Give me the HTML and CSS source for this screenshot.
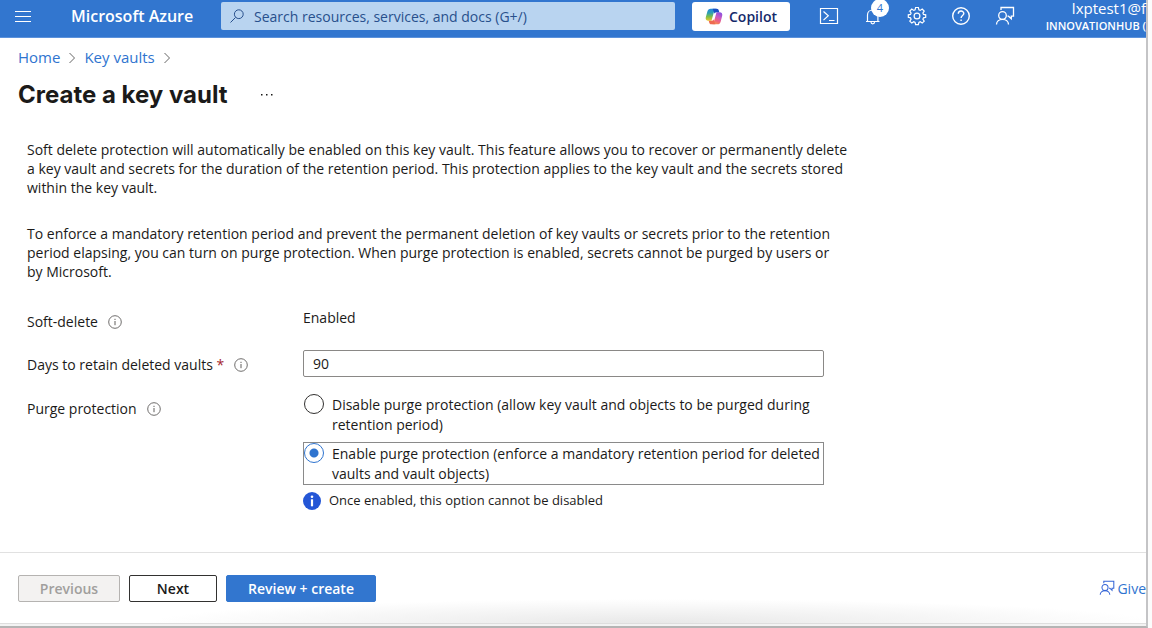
FILE: index.html
```html
<!DOCTYPE html>
<html lang="en">
<head>
<meta charset="utf-8">
<title>Create a key vault - Microsoft Azure</title>
<link rel="stylesheet" href="styles.css">
</head>
<body>
<svg class="defs" aria-hidden="true">
  <defs>
    <symbol id="i-info" viewBox="0 0 14 14"><circle cx="7" cy="7" r="6.300" fill="none" stroke="currentColor" stroke-width=".9"/><path d="M7 6v4.200M7 3.800v1.200" stroke="currentColor" fill="none"/></symbol>
    <symbol id="i-feedback" viewBox="0 0 20 20"><g fill="none" stroke="currentColor" stroke-width="1.300"><circle cx="7.500" cy="9.500" r="3.800"/><path d="M1.500 18.500c0-3 2.600-5.200 6-5.200s6 2.200 6 5.200M6 4V1.500h12.500v8.700h-2.200v2.600l-2.800-2.600h-1"/></g></symbol>
    <symbol id="i-chevron" viewBox="0 0 8 12"><path d="M1.500 1l5 5-5 5" fill="none" stroke="currentColor"/></symbol>
  </defs>
</svg>
<div class="window">
  <header class="topbar">
    <button class="icon-button menu" aria-label="Show portal menu"><svg viewBox="0 0 16 12"><path d="M0 1.500h16M0 6.500h16M0 11.500h16" stroke="currentColor"/></svg></button>
    <a class="brand" href="#">Microsoft Azure</a>
    <label class="search">
      <svg viewBox="0 0 14 14"><g fill="none" stroke="currentColor"><circle cx="8.800" cy="5.200" r="4.400"/><path d="M5.600 8.400L.5 13.500"/></g></svg>
      <input type="search" aria-label="Search" placeholder="Search resources, services, and docs (G+/)">
    </label>
    <button class="copilot">
      <svg viewBox="0 0 18 17" aria-hidden="true">
        <defs>
          <linearGradient id="cool" x1="0.300" y1="0" x2="0.300" y2="1"><stop offset="0" stop-color="#2488dc"/><stop offset=".35" stop-color="#2c9fb5"/><stop offset=".65" stop-color="#79bd4b"/><stop offset="1" stop-color="#e8c82d"/></linearGradient>
          <linearGradient id="warm" x1="0.700" y1="0" x2="0.300" y2="1"><stop offset="0" stop-color="#8c50e0"/><stop offset=".4" stop-color="#cc5abf"/><stop offset=".7" stop-color="#f0647a"/><stop offset="1" stop-color="#f59a4c"/></linearGradient>
        </defs>
        <path fill="url(#warm)" d="M11.500 4.200h3c2.300 0 3.200 1.700 2.700 3.600l-1.500 5.600c-.5 1.900-1.500 2.900-3.400 2.900H6.400c1.500 0 2-1 2.400-2.400z"/>
        <path fill="url(#cool)" d="M6.500 12.700h-3C1.200 12.700.3 11.200.8 9.200l1.500-5.500C2.800 1.700 4 .7 5.800.7h5.800c-1.500 0-2 1-2.400 2.400z"/>
        <path fill="#1b4fc4" d="M7.600.7h4.200c1.200 0 1.800.9 2.100 2.100l.4 1.400h-2.600c-1.200 0-1.800.5-2.100 1.500z"/>
        <path fill="#ee6a50" d="M10.400 16.300H6.200c-1.200 0-1.800-.9-2.100-2.100l-.4-1.500h2.600c1.200 0 1.800-.5 2.100-1.500z"/>
      </svg>
      Copilot
    </button>
    <nav class="tools" aria-label="Portal tools">
      <button class="icon-button" aria-label="Cloud Shell"><svg viewBox="0 0 20 20"><g fill="none" stroke="currentColor" stroke-width="1.200"><path d="M1.500 2.500h17v15h-17zM4.500 5.500l4.800 4.300-4.800 4.300M10 14.500h5.500"/></g></svg></button>
      <button class="icon-button" aria-label="Notifications"><svg viewBox="0 0 20 20"><g fill="none" stroke="currentColor" stroke-width="1.200"><path d="M3 15.500h13.500M4.500 15.500V9c0-3 2.200-5 5.200-5s5.200 2 5.200 5v6.500M8 16c0 2.400 3.500 2.400 3.500 0"/></g></svg><span class="badge">4</span></button>
      <button class="icon-button" aria-label="Settings"><svg viewBox="0 0 20 20"><g fill="none" stroke="currentColor" stroke-width="1.200"><circle cx="10" cy="10" r="2.900"/><path d="M8.600 1.500h2.800l.5 2.300 1.300.6 2-1.300 2 2-1.300 2 .6 1.300 2.200.4v2.500l-2.200.5-.6 1.400 1.300 1.900-2 2-2-1.300-1.300.6-.5 2.200H8.600l-.5-2.200-1.300-.6-2 1.300-2-2 1.300-1.900-.6-1.400-2.200-.5V8.800l2.200-.4.6-1.300-1.300-2 2-2 2 1.300 1.300-.6z"/></g></svg></button>
      <button class="icon-button" aria-label="Help"><svg viewBox="0 0 20 20"><g fill="none" stroke="currentColor" stroke-width="1.400"><circle cx="10" cy="10" r="8.300"/><path d="M7.300 7.800c0-3.700 5.500-3.500 5.500-.3 0 2-2.700 2.200-2.700 4.500M10.100 13.500v1.600"/></g></svg></button>
      <button class="icon-button" aria-label="Feedback"><svg viewBox="0 0 20 20"><use href="#i-feedback"/></svg></button>
    </nav>
    <div class="account"><span class="user">lxptest1@f</span><span class="tenant">INNOVATIONHUB (</span></div>
  </header>

  <nav class="breadcrumb" aria-label="Breadcrumb">
    <a href="#">Home</a><svg><use href="#i-chevron"/></svg><a href="#">Key vaults</a><svg><use href="#i-chevron"/></svg>
  </nav>
  <div class="title-row">
    <h1>Create a key vault</h1>
    <button class="more" aria-label="More"><svg viewBox="0 0 14 2"><path d="M1 0h1.500v1.500H1zM6 0h1.500v1.500H6zM11 0h1.500v1.500H11z" fill="currentColor"/></svg></button>
  </div>

  <main class="content">
    <p>Soft delete protection will automatically be enabled on this key vault. This feature allows you to recover or permanently delete<br>a key vault and secrets for the duration of the retention period. This protection applies to the key vault and the secrets stored<br>within the key vault.</p>
    <p>To enforce a mandatory retention period and prevent the permanent deletion of key vaults or secrets prior to the retention<br>period elapsing, you can turn on purge protection. When purge protection is enabled, secrets cannot be purged by users or<br>by Microsoft.</p>
    <form class="settings">
      <div class="row soft">
        <span class="name">Soft-delete <svg><use href="#i-info"/></svg></span>
        <span class="value">Enabled</span>
      </div>
      <div class="row days">
        <label class="name" for="days"><span>Days to retain deleted vaults <b>*</b></span> <svg><use href="#i-info"/></svg></label>
        <input class="field" id="days" type="text" value="90">
      </div>
      <div class="row purge" role="radiogroup" aria-labelledby="purge-name">
        <span class="name" id="purge-name">Purge protection <svg><use href="#i-info"/></svg></span>
        <div class="options">
          <label class="option"><input type="radio" name="purge"><span>Disable purge protection (allow key vault and objects to be purged during retention period)</span></label>
          <label class="option focused"><input type="radio" name="purge" checked><span>Enable purge protection (enforce a mandatory retention period for deleted vaults and vault objects)</span></label>
          <div class="note"><svg viewBox="0 0 18 18"><circle cx="9" cy="9" r="9" fill="#2456d6"/><circle cx="9" cy="4.700" r="1.300" fill="#fff"/><path d="M9 7.300v7" stroke="#fff" stroke-width="2.200"/></svg>Once enabled, this option cannot be disabled</div>
        </div>
      </div>
    </form>
  </main>

  <footer class="actions">
    <button class="btn previous" disabled>Previous</button>
    <button class="btn next">Next</button>
    <button class="btn primary">Review + create</button>
    <a class="feedback" href="#"><svg><use href="#i-feedback"/></svg>Give</a>
  </footer>
  <div class="edge"></div>
</div>
</body>
</html>
```
FILE: styles.css
```css
* { box-sizing: border-box; }

body {
  margin: 0;
  background: #fcfcfc;
  color: #1b1a19;
  font: 14px/19px "Open Sans", "Noto Sans", sans-serif;
}

button, input { font: inherit; color: inherit; }
button { padding: 0; border: 0; background: none; }
a { color: #2f74cf; text-decoration: none; }
svg { display: block; flex: none; }
.defs { position: absolute; width: 0; height: 0; }

.window {
  display: flex;
  flex-direction: column;
  min-height: 100vh;
  margin-right: 4px;
  border-right: 2px solid #c4c4c6;
  border-bottom: 2px solid #b4b4b4;
  background: #fff;
}

.topbar {
  display: flex;
  align-items: center;
  height: 38px;
  padding: 0 0 5px 15px;
  border-bottom: 1px solid #5c92dc;
  background: #3276cf;
  color: #fff;
}
.icon-button { position: relative; flex: none; }
.icon-button svg { width: 20px; height: 20px; }
.menu svg { width: 16px; height: 12px; }
.brand {
  flex: none;
  width: 190px;
  padding-left: 40px;
  color: #fff;
  font-size: 16px;
  font-weight: 600;
  white-space: nowrap;
}
.search {
  display: flex;
  flex: 0 1 454px;
  align-items: center;
  gap: 10px;
  min-width: 0;
  height: 28px;
  padding: 0 9px;
  border-radius: 2px;
  background: #b9d4f0;
  color: #28508c;
}
.search svg { width: 14px; height: 14px; }
.search input {
  flex: 1;
  min-width: 0;
  padding: 0;
  border: 0;
  outline: 0;
  background: none;
}
.search input::placeholder { color: #28508c; opacity: 1; }
.copilot {
  display: flex;
  flex: none;
  align-items: center;
  justify-content: center;
  gap: 6px;
  width: 98px;
  height: 29px;
  margin-left: 17px;
  border-radius: 3px;
  background: #fff;
  color: #14296a;
  font-weight: 600;
}
.copilot svg { width: 18px; height: 17px; }
.tools { display: flex; flex: none; gap: 24px; margin-left: 29px; }
.badge {
  position: absolute;
  top: -7px;
  left: 8px;
  width: 18px;
  height: 18px;
  border-radius: 50%;
  background: #fff;
  color: #2f74cf;
  font-size: 11px;
  line-height: 18px;
  text-align: center;
}
.account {
  display: flex;
  flex: none;
  flex-direction: column;
  align-items: flex-end;
  margin-left: auto;
  padding-top: 2px;
  line-height: 17px;
  white-space: nowrap;
}
.user { font-size: 15px; }
.tenant { font-size: 11px; font-weight: 600; }

.breadcrumb {
  display: flex;
  align-items: center;
  gap: 8px;
  padding: 10px 18px 0;
  font-size: 15px;
}
.breadcrumb svg { width: 8px; height: 12px; color: #666; }

.title-row {
  display: flex;
  align-items: center;
  gap: 32px;
  padding: 12px 18px 0;
}
h1 {
  margin: 0;
  font: 700 24px/32px Inter, "Liberation Sans", sans-serif;
}
.more svg { width: 14px; height: 2px; }

.content {
  flex: 1;
  padding: 29px 27px 0;
}
.content p { margin: 0 0 27px; }

.settings { max-width: 797px; }
.row { display: grid; grid-template-columns: 276px 1fr; align-items: start; }
.name { display: flex; align-items: center; gap: 10px; }
.name svg { width: 14px; height: 14px; color: #605e5c; }
.name b { color: #a4262c; font-weight: 400; }
.soft .name { padding-top: 4px; }
.days { padding-top: 19px; }
.days .name { padding-top: 5px; }
.field {
  width: 100%;
  height: 27px;
  padding: 0 9px;
  border: 1px solid #8a8886;
  border-radius: 2px;
  background: #fff;
}
.purge { padding-top: 16px; }
.purge .name { padding-top: 6px; }
.option {
  display: flex;
  gap: 8px;
  border: 1px solid transparent;
  line-height: 20px;
}
.option span { padding-top: 1px; }
.option input {
  flex: none;
  width: 20px;
  height: 20px;
  margin: 0;
  appearance: none;
  border: 1px solid #323130;
  border-radius: 50%;
}
.option input:checked {
  border-color: #2f74cf;
  background: radial-gradient(circle, #2f74cf 4px, transparent 5px);
}
.option.focused { margin-top: 6px; border-color: #8a8a8a; }
.note {
  display: flex;
  align-items: center;
  gap: 8px;
  padding-top: 6px;
  font-size: 13px;
}
.note svg { width: 18px; height: 18px; }

.actions {
  display: flex;
  align-items: center;
  gap: 9px;
  height: 72px;
  padding-left: 18px;
  border-top: 1px solid #e1e1e1;
  border-bottom: 1px solid #dedede;
  background: radial-gradient(ellipse 44% 24px at 57% 100%, #e8e8e8, transparent);
}
.btn {
  height: 27px;
  border: 1px solid #323130;
  border-radius: 2px;
  font-weight: 600;
}
.previous { width: 102px; border-color: #b5b3b1; background: #f3f2f1; color: #a19f9d; }
.next { width: 88px; background: #fff; }
.primary { width: 150px; border-color: #3276cf; background: #3276cf; color: #fff; }
.feedback { display: flex; align-items: center; gap: 2px; margin-left: auto; }
.feedback svg { width: 16px; height: 16px; color: #3565d6; }
.edge { height: 2px; background: #f3f3f3; }
```
